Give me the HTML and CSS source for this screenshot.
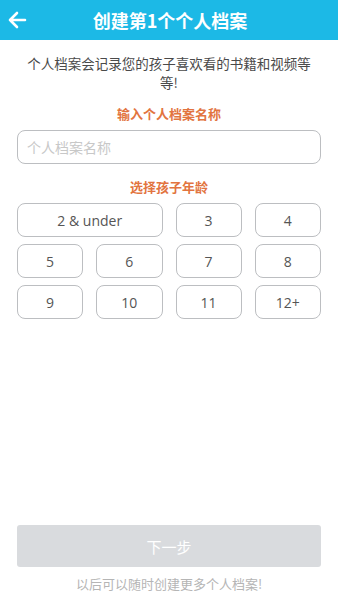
FILE: index.html
```html
<!DOCTYPE html>
<html lang="zh-CN">
<head>
    <meta charset="UTF-8">
    <meta name="viewport" content="width=device-width, initial-scale=1.0">
    <title>创建个人档案</title>
    <link rel="stylesheet" href="styles.css">
</head>
<body>
    <div class="page">
        <header class="topbar">
            <span class="back">
                <svg width="20" height="18" viewBox="0 0 20 18"><path d="M18 9H3M10 2L3 9l7 7" fill="none" stroke="#fff" stroke-width="2.6" stroke-linecap="round" stroke-linejoin="round"/></svg>
            </span>
            <h1>创建第1个个人档案</h1>
        </header>

        <main class="content">
            <p class="intro">个人档案会记录您的孩子喜欢看的书籍和视频等等!</p>

            <h2>输入个人档案名称</h2>
            <input type="text" class="name-input" placeholder="个人档案名称">

            <h2>选择孩子年龄</h2>
            <div class="ages">
                <button class="age wide">2 &amp; under</button>
                <button class="age">3</button>
                <button class="age">4</button>
                <button class="age">5</button>
                <button class="age">6</button>
                <button class="age">7</button>
                <button class="age">8</button>
                <button class="age">9</button>
                <button class="age">10</button>
                <button class="age">11</button>
                <button class="age">12+</button>
            </div>
        </main>

        <footer class="bottom">
            <button class="next" disabled>下一步</button>
            <p class="hint">以后可以随时创建更多个人档案!</p>
        </footer>
    </div>
</body>
</html>
```

FILE: styles.css
```css
* {
    box-sizing: border-box;
}
body {
    margin: 0;
    font-family: "Open Sans", "Noto Sans CJK SC", sans-serif;
    background-color: #fff;
}
.page {
    height: 600px;
    display: flex;
    flex-direction: column;
}
.topbar {
    height: 40px;
    background-color: #1cb9e6;
    display: flex;
    align-items: center;
    justify-content: center;
    position: relative;
}
.back {
    position: absolute;
    left: 7px;
    top: 11px;
    display: flex;
}
.topbar h1 {
    margin: 0 0 0 2px;
    color: #fff;
    font-size: 18px;
    font-weight: bold;
    font-family: "Noto Sans CJK SC", sans-serif;
}
.content {
    flex: 1;
    padding: 0 17px;
}
.intro {
    margin: 14px 7px 0;
    text-align: center;
    font-size: 13.5px;
    line-height: 19px;
    color: #4a4a4a;
    font-family: "Noto Sans CJK SC", sans-serif;
}
h2 {
    margin: 0;
    text-align: center;
    color: #e2743f;
    font-size: 13px;
    font-weight: bold;
    font-family: "Noto Sans CJK SC", sans-serif;
}
.intro + h2 {
    margin-top: 12px;
}
.name-input {
    display: block;
    width: 100%;
    height: 34px;
    margin: 7px 0 13px;
    padding: 0 9px;
    border: 1.5px solid #bcbec1;
    border-radius: 8px;
    font-size: 14px;
    font-family: "Noto Sans CJK SC", sans-serif;
    outline: none;
}
.name-input::placeholder {
    color: #c8c8c8;
}
.ages {
    margin-top: 7px;
    display: grid;
    grid-template-columns: repeat(4, 1fr);
    column-gap: 13px;
    row-gap: 7px;
}
.age {
    height: 34px;
    border: 1.5px solid #bcbec1;
    border-radius: 8px;
    background-color: #fff;
    color: #555;
    font-size: 14px;
    font-family: "Open Sans", sans-serif;
    padding: 0;
}
.age.wide {
    grid-column: span 2;
}
.bottom {
    padding: 0 17px 7px;
}
.next {
    display: block;
    width: 100%;
    height: 42px;
    border: none;
    border-radius: 3px;
    background-color: #d9dbde;
    color: #fff;
    font-size: 15px;
    font-family: "Noto Sans CJK SC", sans-serif;
}
.hint {
    margin: 7px 0 0;
    text-align: center;
    font-size: 13px;
    color: #b5b5b5;
    font-family: "Noto Sans CJK SC", sans-serif;
}
```
